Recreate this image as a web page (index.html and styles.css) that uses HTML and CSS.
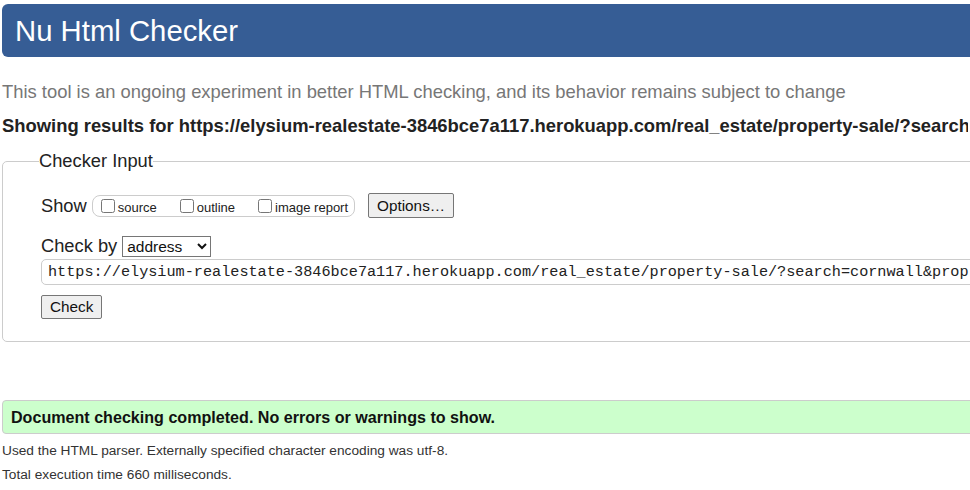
FILE: index.html
```html
<!DOCTYPE html>
<html lang="en">
<head>
<meta charset="utf-8">
<title>Showing results for https://elysium-realestate-3846bce7a117.herokuapp.com/ - Nu Html Checker</title>
<link rel="stylesheet" href="styles.css">
</head>
<body>
<div class="page">
  <h1 class="masthead">Nu Html Checker</h1>
  <p class="tagline">This tool is an ongoing experiment in better HTML checking, and its behavior remains subject to change</p>
  <p class="results-for">Showing results for https://elysium-realestate-3846bce7a117.herokuapp.com/real_estate/property-sale/?search</p>
  <form class="checker">
    <fieldset class="input-set">
      <legend class="legend">Checker Input</legend>
      <div class="row show-row">
        <span class="label">Show</span>
        <span class="opts">
          <label class="opt"><input type="checkbox" class="cb"><span class="opt-text">source</span></label>
          <label class="opt"><input type="checkbox" class="cb"><span class="opt-text">outline</span></label>
          <label class="opt"><input type="checkbox" class="cb"><span class="opt-text">image report</span></label>
        </span>
        <button type="button" class="btn options">Options…</button>
      </div>
      <div class="row checkby-row">
        <span class="label">Check by</span>
        <select class="sel"><option>address</option></select>
      </div>
      <div class="row url-row">
        <input class="url" type="text" value="https://elysium-realestate-3846bce7a117.herokuapp.com/real_estate/property-sale/?search=cornwall&amp;prop">
      </div>
      <div class="row">
        <button type="button" class="btn check">Check</button>
      </div>
    </fieldset>
  </form>
  <p class="success">Document checking completed. No errors or warnings to show.</p>
  <p class="details">Used the HTML parser. Externally specified character encoding was utf-8.</p>
  <p class="details">Total execution time 660 milliseconds.</p>
</div>
</body>
</html>
```
FILE: styles.css
```css
html, body {
  margin: 0;
  padding: 0;
  overflow: hidden;
  background: #fff;
}
body {
  font-family: "Liberation Sans", Arial, sans-serif;
  color: #222;
}
.page {
  width: 1300px;
  padding: 4px 0 0 2px;
}
.masthead {
  margin: 0;
  background: #365d95;
  color: #fff;
  font-weight: normal;
  font-size: 29.3px;
  line-height: 53px;
  height: 53px;
  padding-left: 13px;
  border-radius: 6px;
}
.tagline {
  margin: 21px 0 0 0;
  font-size: 18.4px;
  color: #777;
  line-height: 28px;
  white-space: nowrap;
}
.results-for {
  margin: 6px 0 0 0;
  font-size: 18.4px;
  font-weight: bold;
  color: #222;
  line-height: 28px;
  white-space: nowrap;
  width: 966px;
  overflow: hidden;
}
.checker {
  margin: 10px 0 0 0;
}
.input-set {
  margin: 0;
  border: 1px solid #ccc;
  border-radius: 5px;
  padding: 12px 0 22px 38px;
  min-inline-size: 0;
}
.legend {
  font-size: 18.3px;
  color: #222;
  padding: 0;
  margin-left: -2px;
}
.row {
  display: flex;
  align-items: center;
}
.label {
  font-size: 18.3px;
  color: #222;
}
.show-row {
  margin-top: 9px;
}
.opts {
  display: inline-flex;
  align-items: center;
  margin-left: 5px;
  border: 1px solid #ccc;
  border-radius: 8px;
  height: 20px;
  padding: 0 6px 0 8px;
  gap: 23px;
}
.opt {
  display: inline-flex;
  align-items: center;
  font-size: 13px;
  color: #222;
}
.opt-text {
  margin-top: 3px;
}
.cb {
  margin: 0 3px 0 0;
  width: 14px;
  height: 14px;
}
.btn {
  font-family: "Liberation Sans", Arial, sans-serif;
  font-size: 15.3px;
  color: #111;
  background: #efefef;
  border: 1px solid #767676;
  border-radius: 2px;
  padding: 1px 8px;
}
.options {
  margin-left: 13px;
  height: 25px;
  width: 86px;
}
.checkby-row {
  margin-top: 17px;
}
.sel {
  margin-left: 5px;
  font-family: "Liberation Sans", Arial, sans-serif;
  font-size: 15.5px;
  height: 21px;
  width: 89px;
  color: #111;
  border: 1px solid #767676;
  border-radius: 0;
  background: #fff;
}
.url-row {
  margin-top: 2px;
}
.url {
  width: 1200px;
  height: 26px;
  box-sizing: border-box;
  font-family: "Liberation Mono", "Courier New", monospace;
  font-size: 15.2px;
  color: #222;
  border: 1px solid #ccc;
  border-radius: 5px;
  padding: 0 6px;
}
.check {
  margin-top: 10px;
  height: 24px;
  padding: 1px 8px;
}
.success {
  margin: 58px 0 0 0;
  background: #ccffcc;
  border: 1px solid #ccc;
  border-radius: 4px;
  font-size: 16.1px;
  font-weight: bold;
  color: #111;
  line-height: 32px;
  padding-left: 8px;
}
.details {
  margin: 9px 0 0 0;
  font-size: 13.7px;
  color: #333;
  line-height: 16px;
}
.details + .details {
  margin-top: 8px;
}
```
